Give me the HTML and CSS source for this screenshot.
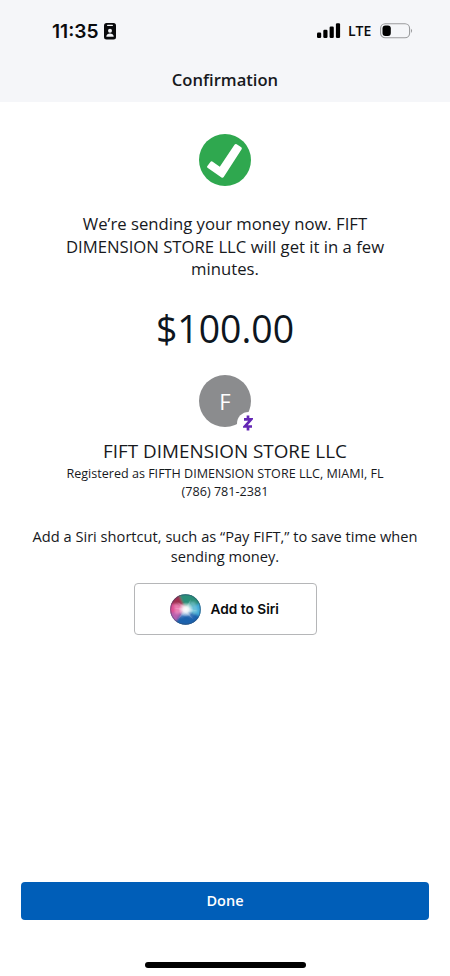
FILE: index.html
```html
<!DOCTYPE html>
<html lang="en">
<head>
<meta charset="utf-8">
<title>Confirmation</title>
<link rel="stylesheet" href="styles.css">
</head>
<body>
<div class="screen">
  <header class="header">
    <div class="status">
      <span class="time">11:35</span>
      <svg class="badge-icon" width="12" height="17" viewBox="0 0 12 17"><rect width="12" height="16.500" rx="2.500" fill="#0a0b0d"/><rect x="3" y="1.700" width="6" height="1.200" rx=".6" fill="#f5f6f9"/><circle cx="6" cy="7.800" r="2" fill="#f5f6f9"/><path d="M2.300 13.700c0-4.200 7.400-4.200 7.400 0z" fill="#f5f6f9"/></svg>
      <svg class="signal" width="24" height="16" viewBox="0 0 24 16"><rect x="0" y="9.500" width="4.200" height="5.500" rx="1.200"/><rect x="6.300" y="6.700" width="4.200" height="8.300" rx="1.200"/><rect x="12.600" y="3.500" width="4.200" height="11.500" rx="1.200"/><rect x="18.900" y="0.300" width="4.200" height="14.700" rx="1.200"/></svg>
      <span class="lte">LTE</span>
      <svg class="battery" width="33" height="16" viewBox="0 0 33 16"><rect x=".6" y=".8" width="29" height="14" rx="4.600" fill="none" stroke="#9a9b9d" stroke-width="1.100"/><rect x="2.500" y="2.600" width="8.300" height="10.300" rx="2.900"/><path d="M31 5.700q2.200 2 0 4.300z" fill="#9a9b9d"/></svg>
    </div>
    <h1 class="title">Confirmation</h1>
  </header>
  <main class="content">
    <svg class="check" width="52" height="52" viewBox="0 0 52 52"><circle cx="26" cy="26" r="26" fill="#2fa84f"/><path d="M8.200 32.200L11.600 27.700Q12.400 26.900 13.300 27.600L20.800 32.800L35.500 10.700Q36.400 9.400 37.700 10.200L42.300 13.300Q43.300 14.100 42.600 15.200L24.700 43.100Q23.800 44.400 22.500 43.500L8.500 33.700Q7.700 33.100 8.200 32.200Z" fill="#fff"/></svg>
    <p class="message">We’re sending your money now. FIFT<br>DIMENSION STORE LLC will get it in a few<br>minutes.</p>
    <div class="amount">$100.00</div>
    <div class="avatar">F
      <span class="zelle"><svg width="10" height="16" viewBox="0 0 10 16"><path d="M5 .6v3.400M5 12v3.400M1 4.300h7.200L1.800 11.500h7.200" fill="none" stroke="#6427b5" stroke-width="2.700"/></svg></span>
    </div>
    <h2 class="name">FIFT DIMENSION STORE LLC</h2>
    <p class="registered">Registered as FIFTH DIMENSION STORE LLC, MIAMI, FL</p>
    <p class="phone">(786) 781-2381</p>
    <p class="hint">Add a Siri shortcut, such as “Pay FIFT,” to save time when<br>sending money.</p>
    <button class="siri">
      <svg class="orb" width="31" height="31" viewBox="0 0 31 31">
        <defs>
          <clipPath id="disc"><circle cx="15.500" cy="15.500" r="15.300"/></clipPath>
          <filter id="soft" x="-30%" y="-30%" width="160%" height="160%"><feGaussianBlur stdDeviation="1.300"/></filter>
          <radialGradient id="glow"><stop offset="0" stop-color="#fff"/><stop offset=".35" stop-color="#fff" stop-opacity=".85"/><stop offset="1" stop-color="#fff" stop-opacity="0"/></radialGradient>
        </defs>
        <g clip-path="url(#disc)">
          <rect width="31" height="31" fill="#3b5f80"/>
          <g filter="url(#soft)">
            <path d="M15 15L6 0H31V12Z" fill="#2b8e79"/>
            <path d="M15 15L31 9V24Z" fill="#3fa9d8"/>
            <path d="M15 15L31 23L24 31H8L5 27Z" fill="#1f62ad"/>
            <path d="M15 15L5 28L-2 22V14Z" fill="#b75fae"/>
            <path d="M15 15L-2 20V7L5 5Z" fill="#dd4e91"/>
            <path d="M15 14L-1 9L8 -1Z" fill="#a02f50"/>
            <path d="M4 10Q13 9 17 15Q12 20 5 20Z" fill="#ef8fbd" opacity=".75"/>
            <path d="M16 15L20 8L25 8L28 17L24 21Z" fill="#80cbd9" opacity=".65"/>
            <path d="M15 16L10 24L16 21L24 24Z" fill="#7eaee2" opacity=".65"/>
          </g>
          <circle cx="16" cy="15.500" r="7.500" fill="url(#glow)"/>
          <path d="M7 8L16 13L21 5L18.500 14L28 17L18 18L23 25L15.500 19L8 25L13 17L4 14L13 14Z" fill="#fff" opacity=".18"/>
          <circle cx="15.500" cy="15.500" r="14.900" fill="none" stroke="#2c496b" stroke-opacity=".45"/>
        </g>
      </svg>
      <span>Add to Siri</span>
    </button>
  </main>
  <footer class="footer">
    <button class="done">Done</button>
    <div class="home"></div>
  </footer>
</div>
</body>
</html>
```
FILE: styles.css
```css
* { box-sizing: border-box; }
body { margin: 0; background: #fff; color: #17191d; font-family: "Open Sans", sans-serif; }
h1, h2, p { margin: 0; font-weight: 400; white-space: nowrap; }
button { font: inherit; padding: 0; }
.screen { width: 450px; height: 976px; display: flex; flex-direction: column; overflow: hidden; }
.header { height: 102px; flex: none; background: #f5f6f9; padding-top: 19px; }
.status { height: 24px; display: flex; align-items: center; padding-left: 52px; }
.time { width: 47px; font: 600 19.200px/24px Inter, sans-serif; color: #0a0b0d; white-space: nowrap; }
.badge-icon { margin-left: 5px; }
.signal { margin-left: 201px; }
.lte { width: 24px; margin-left: 7px; font: 600 14px/24px "Open Sans", sans-serif; color: #0a0b0d; }
.battery { margin-left: 8px; }
.title { margin-top: 25px; font-size: 16.600px; line-height: 24px; font-weight: 600; text-align: center; }
.content { flex: 1; display: flex; flex-direction: column; align-items: center; text-align: center; padding-top: 32px; }
.message { margin-top: 27px; font-size: 16.700px; line-height: 22.700px; }
.amount { margin-top: 25px; font-size: 37.400px; line-height: 46px; color: #0d1520; }
.avatar { position: relative; width: 52px; height: 52px; margin-top: 22.700px; border-radius: 50%; background: #8b8c8e; color: #fff; font-size: 22px; line-height: 52px; }
.zelle { position: absolute; left: 37.500px; top: 37px; width: 23px; height: 23px; border-radius: 50%; background: #fff; display: flex; align-items: center; justify-content: center; }
.name { margin-top: 11px; font-size: 18.850px; line-height: 26px; }
.registered { font-size: 12.570px; line-height: 19px; }
.phone { font-size: 12.600px; line-height: 18px; }
.hint { margin-top: 25px; font-size: 14.650px; line-height: 20px; }
.siri { width: 183px; height: 52px; margin-top: 17px; padding: 1px 0 0 35px; border: 1px solid #b5b6b8; border-radius: 4px; background: #fff; display: flex; align-items: center; gap: 10px; color: #0a0b0d; font: 600 13.700px/20px Inter, sans-serif; }
.orb { flex: none; }
.footer { height: 94px; flex: none; display: flex; flex-direction: column; align-items: center; }
.done { width: 408px; height: 38px; flex: none; padding-bottom: 2px; border: 0; border-radius: 4px; background: #005eb8; color: #fff; font-size: 14.500px; font-weight: 600; }
.home { width: 161px; height: 6px; margin-top: 42px; border-radius: 3px; background: #000; }
```
